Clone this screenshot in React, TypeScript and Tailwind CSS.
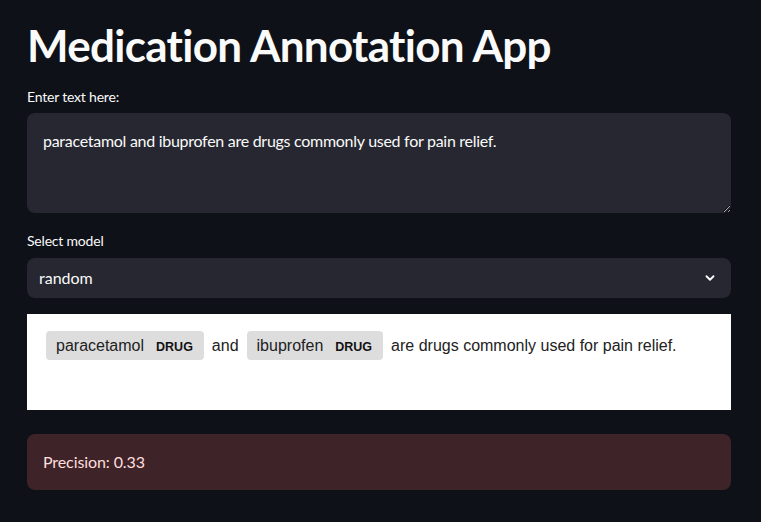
import React from "react";

const ui = { fontFamily: "Lato, 'Noto Sans', sans-serif" };
const dc = { fontFamily: "'Liberation Sans', Arial, sans-serif" };

function Ent({ text }: { text: string }) {
  return (
    <span className="inline-block h-[29px] leading-[29px] pl-[10px] pr-[11px] mx-[4px] rounded-[4px] bg-[#dddddd] text-[16px] text-[#222]">
      {text}
      <span className="ml-[12px] text-[12.5px] font-bold text-[#111]">DRUG</span>
    </span>
  );
}

export default function App() {
  return (
    <div className="min-h-[522px] w-[761px] bg-[#0e1117] text-[#fafafa]" style={ui}>
      <div className="pl-[27px] w-[731px] pt-[19px]">
        <h1 className="text-[44px] font-bold leading-[52px] tracking-[-0.7px]">Medication Annotation App</h1>
        <div className="mt-[16px] text-[14px] leading-[20px] tracking-[-0.2px]">Enter text here:</div>
        <textarea
          readOnly
          className="mt-[6px] block w-full h-[100px] rounded-[8px] bg-[#262730] px-[16px] pt-[16px] pb-[16px] text-[16px] leading-[24px] tracking-[-0.28px] text-[#fafafa] outline-none resize-y [color-scheme:dark]"
          style={ui}
          defaultValue="paracetamol and ibuprofen are drugs commonly used for pain relief."
        />
        <div className="mt-[18px] text-[14px] leading-[20px] tracking-[-0.2px]">Select model</div>
        <div className="mt-[7px] h-[40px] rounded-[8px] bg-[#262730] flex items-center justify-between pl-[12px] pr-[14px] text-[16px]">
          <span>random</span>
          <svg width="14" height="14" viewBox="0 0 24 24" fill="none" stroke="#fafafa" strokeWidth="3.2" strokeLinecap="round" strokeLinejoin="round">
            <path d="M6 9l6 6 6-6" />
          </svg>
        </div>
        <div className="mt-[16px] h-[96px] bg-white pl-[15px] pt-[17px] text-[16px] leading-[29px] text-[#222]" style={dc}>
          <Ent text="paracetamol" />
          <span className="mx-[4px]">and</span>
          <Ent text="ibuprofen" />
          <span className="ml-[4px]">are drugs commonly used for pain relief.</span>
        </div>
        <div className="mt-[24px] h-[56px] rounded-[8px] bg-[#3e2328] flex items-center px-[16px] text-[16px] text-[#ffdede] tracking-[-0.1px]">
          Precision: 0.33
        </div>
      </div>
    </div>
  );
}
